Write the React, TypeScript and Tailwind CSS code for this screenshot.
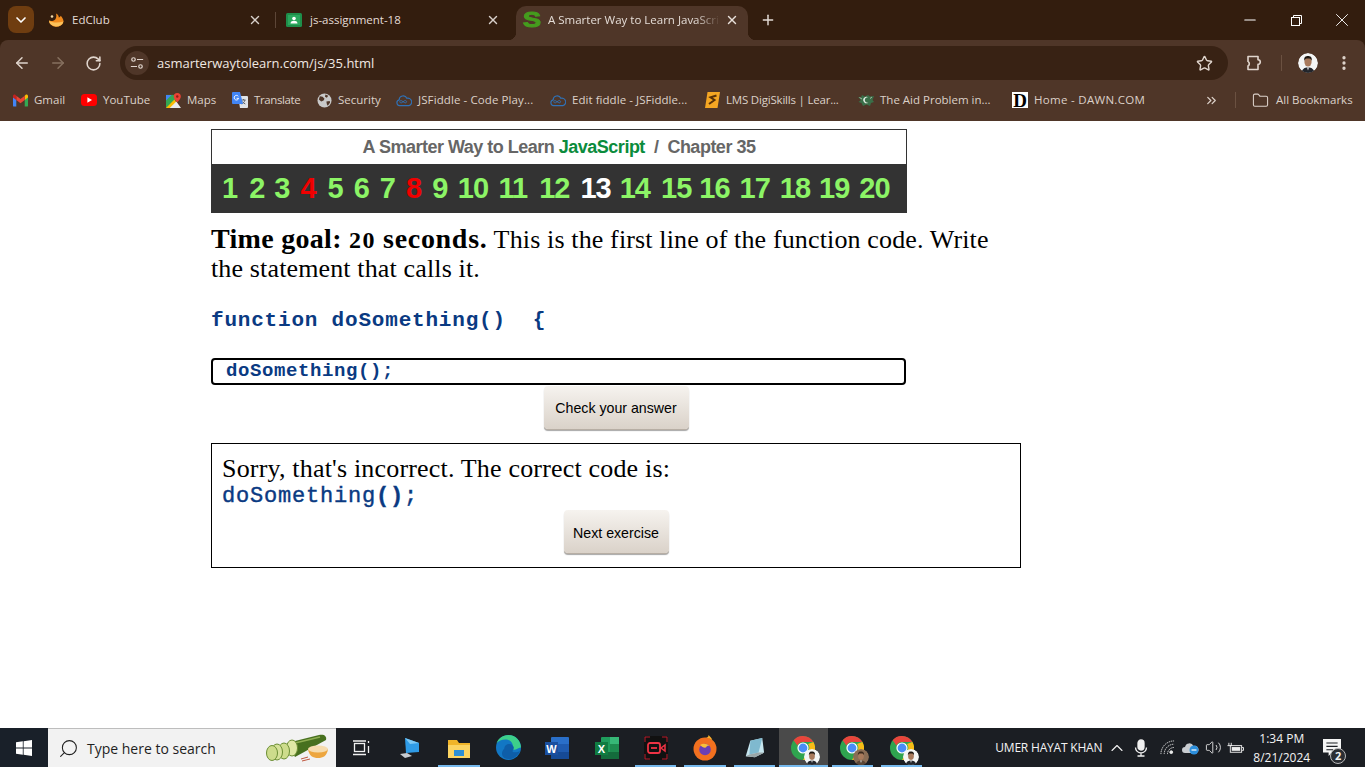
import React from "react";
import {
  ChevronDown, X, Plus, ArrowLeft, ArrowRight, RotateCw, Star, EllipsisVertical,
  Folder, ChevronsRight, Minus, ChevronUp, Search, Volume2,
} from "lucide-react";

const ui = "font-['Open_Sans',sans-serif]";

function ChromeBall() {
  return (
    <svg viewBox="0 0 24 24" className="w-[24px] h-[24px]">
      <circle cx="12" cy="12" r="12" fill="#2fa44f" />
      <path d="M12 0a12 12 0 0 1 10.4 6H12a6 6 0 0 0-5.6 3.6L2.6 4.2A12 12 0 0 1 12 0z" fill="#e8453c" />
      <path d="M22.4 6A12 12 0 0 1 12 24l4.6-8A6 6 0 0 0 17 8z" fill="#f9bc15" />
      <circle cx="12" cy="12" r="5.6" fill="#fff" />
      <circle cx="12" cy="12" r="4.4" fill="#4a8df6" />
    </svg>
  );
}

function Face({ size, bg = "#f4f6f6", hair = "#1d1712", coat = "#22252b" }: { size: number; bg?: string; hair?: string; coat?: string }) {
  return (
    <svg viewBox="0 0 20 20" width={size} height={size}>
      <circle cx="10" cy="10" r="10" fill={bg} />
      <path d="M3.6 20c.4-4.4 3-5.6 6.4-5.6s6 1.2 6.4 5.6z" fill={coat} />
      <path d="M9 14.4h2l-1 3z" fill="#e8e8e8" />
      <ellipse cx="10" cy="8.8" rx="3.6" ry="4.8" fill="#a87a5c" />
      <path d="M6.2 8C5.8 3.6 8 3 10 3s4.2.6 3.8 5c-.6-2-1.6-2.4-3.8-2.4S6.8 6 6.2 8z" fill={hair} />
    </svg>
  );
}

function Flame() {
  return (
    <svg viewBox="0 0 16 16" className="w-[16px] h-[16px]">
      <path d="M1 8.500c2 .8 4.500.4 6-.8C8.200 6.600 8.800 4 8 1.500c2 .8 2.800 2.500 2.800 4 1-.3 1.700-1 2-1.800C14.500 6 15.500 7.500 15.500 9.500A7.300 6.300 0 0 1 1 8.500z" fill="#f08a1d" />
      <path d="M1 8.500c3 2.500 9 2.500 14.500 1A7.300 6 0 0 1 1 8.500z" fill="#fbc15a" />
      <circle cx="4" cy="4.500" r="1.300" fill="#f0d9a8" />
    </svg>
  );
}

function Classroom() {
  return (
    <svg viewBox="0 0 16 16" className="w-[16px] h-[16px]">
      <rect y="1" width="16" height="14" rx="1.500" fill="#1e8e4a" />
      <rect x="2" y="3" width="12" height="10" fill="#2aa75c" />
      <circle cx="8" cy="6.500" r="1.800" fill="#fff" />
      <path d="M4.500 11.500c0-2 1.800-2.700 3.500-2.700s3.500.7 3.500 2.700z" fill="#fff" />
    </svg>
  );
}

function Gmail() {
  return (
    <svg viewBox="0 0 16 13" className="w-[15px] h-[13px]">
      <path d="M0 2.500V12a1 1 0 0 0 1 1h2.500V5.500z" fill="#4285f4" />
      <path d="M16 2.500V12a1 1 0 0 1-1 1h-2.500V5.500z" fill="#34a853" />
      <path d="M12.500 1.500V6L16 3.400V1.700C16 .3 14.400-.4 13.300.5z" fill="#fbbc04" />
      <path d="M3.500 6V1.500L8 5l4.500-3.500V6L8 9.300z" fill="#ea4335" />
      <path d="M0 1.700v1.700L3.500 6V1.500L2.700.5C1.600-.4 0 .3 0 1.700z" fill="#c5221f" />
    </svg>
  );
}

function YouTube() {
  return (
    <svg viewBox="0 0 16 12" className="w-[16px] h-[12px]">
      <rect width="16" height="12" rx="3.500" fill="#f00" />
      <path d="M6.400 3.300v5.400L11 6z" fill="#fff" />
    </svg>
  );
}

function Maps() {
  return (
    <svg viewBox="0 0 16 16" className="w-[15px] h-[15px]">
      <path d="M0 2h10v14H0z" fill="#34a853" />
      <path d="M0 2h6L0 8z" fill="#4285f4" />
      <path d="M0 16l9-9 6 9z" fill="#fbbc04" />
      <path d="M4 16l7-7 5 7z" fill="#e8eaed" />
      <path d="M12 0a3.800 3.800 0 0 1 3.800 3.800C15.800 6.500 12 10 12 10S8.200 6.500 8.200 3.800A3.800 3.800 0 0 1 12 0z" fill="#ea4335" />
      <circle cx="12" cy="3.800" r="1.300" fill="#8f1d14" />
    </svg>
  );
}

function Translate() {
  return (
    <svg viewBox="0 0 16 16" className="w-[16px] h-[16px]">
      <path d="M6 4h9a1 1 0 0 1 1 1v10a1 1 0 0 1-1 1H8z" fill="#dfe3e8" />
      <path d="M9.500 8h4M11.500 7v1M13 8c-.5 2-2 3.500-3.300 4M10.300 9.500c.6 1 1.700 2 3 2.500" stroke="#5f6368" strokeWidth="1" fill="none" />
      <path d="M1 0h7l3 12H1a1 1 0 0 1-1-1V1a1 1 0 0 1 1-1z" fill="#4285f4" />
      <path d="M6.300 4.300a2.300 2.300 0 1 0 .4 2H4.600" stroke="#fff" strokeWidth="1" fill="none" />
    </svg>
  );
}

function Globe() {
  return (
    <svg viewBox="0 0 16 16" className="w-[15px] h-[15px]">
      <circle cx="8" cy="8" r="7.500" fill="#c9c9c9" />
      <path d="M3 3.500l3 .5 2 2-1 2-2.500 1L2 7zM9 1.500l3 1.500-1.500 2L8.500 4zM10 9l3.500-.5.5 1.500-2.500 3.500L10.500 12z" fill="#4f3628" />
    </svg>
  );
}

function Fiddle() {
  return (
    <svg viewBox="0 0 18 14" className="w-[16px] h-[13px]" fill="none" stroke="#2f72b8" strokeWidth="1.300">
      <path d="M4 12.800a3.300 3.300 0 0 1-.4-6.500 4.500 4.500 0 0 1 8.600-1.800 4 4 0 0 1 2.300 8.300z" />
      <path d="M6.800 7.600c-1.700-1.300-3 .2-2.400 1.300.6 1.100 2 1 2.900 0l1.800-1.300c1-.8 2.400-.7 2.800.4.400 1.100-1 2.400-2.600 1.200z" strokeWidth="1" />
    </svg>
  );
}

function Digi() {
  return (
    <svg viewBox="0 0 15 16" className="w-[15px] h-[16px]">
      <path d="M2.500 0H15l-2.500 16H0z" fill="#f5a623" />
      <path d="M11.500 3.500L5.500 5.300 9.500 8 4 12" stroke="#5a3208" strokeWidth="2" fill="none" />
    </svg>
  );
}

function Aid() {
  return (
    <svg viewBox="0 0 16 13" className="w-[16px] h-[13px]">
      <path d="M0 3l3 .5L4 1l3 1.500L10 1l2 1.500L16 2l-1.500 4L16 8l-3 1-1 3-3.500-1.500L5 12 3.500 9 .5 8 3 6z" fill="#3a6e48" />
      <path d="M10.500 3.500a3.200 3.200 0 1 0 0 5 2.700 2.700 0 1 1 0-5z" fill="#e6efe6" />
      <path d="M1.500 3.500L4 5M14 3l-2 1.500" stroke="#b9d0bc" strokeWidth=".8" />
    </svg>
  );
}

const bookmarks = [
  { icon: <Gmail />, label: "Gmail", w: "w-[31px]", t: "" },
  { icon: <YouTube />, label: "YouTube", w: "w-[46px]", t: "" },
  { icon: <Maps />, label: "Maps", w: "w-[29px]", t: "" },
  { icon: <Translate />, label: "Translate", w: "w-[46px]", t: "tracking-[-.4px]" },
  { icon: <Globe />, label: "Security", w: "w-[42px]", t: "" },
  { icon: <Fiddle />, label: "JSFiddle - Code Play...", w: "w-[116px]", t: "tracking-[.1px]" },
  { icon: <Fiddle />, label: "Edit fiddle - JSFiddle...", w: "w-[116px]", t: "tracking-[.05px]" },
  { icon: <Digi />, label: "LMS DigiSkills | Lear...", w: "w-[116px]", t: "tracking-[-.2px]" },
  { icon: <Aid />, label: "The Aid Problem in...", w: "w-[116px]", t: "" },
  {
    icon: (
      <span className="w-[16px] h-[16px] bg-white text-black flex items-center justify-center font-['Liberation_Serif',serif] text-[19px] leading-none font-bold">
        D
      </span>
    ),
    label: "Home - DAWN.COM",
    w: "w-[110px]",
    t: "tracking-[.3px]",
  },
];

function Tabs() {
  return (
    <div className={`h-[40px] bg-[#331d0e] flex items-start pl-[8px] text-[#e4dcd6] text-[11.500px] ${ui}`}>
      <div className="mt-[6px] w-[26px] h-[27px] rounded-[8px] bg-[#6f3d10] flex items-center justify-center text-white">
        <ChevronDown size={16} strokeWidth={2.500} />
      </div>
      <div className="mt-[6px] ml-[14px] w-[228px] h-[27px] flex items-center">
        <Flame />
        <span className="ml-[8px] flex-1">EdClub</span>
        <X size={14} strokeWidth={2.400} className="text-[#d8d0ca]" />
        <span className="ml-[13px] w-px h-[16px] bg-[#5d4637]" />
      </div>
      <div className="mt-[6px] ml-[10px] w-[214px] h-[27px] flex items-center">
        <Classroom />
        <span className="ml-[8px] flex-1">js-assignment-18</span>
        <X size={14} strokeWidth={2.400} className="text-[#d8d0ca]" />
      </div>
      <div className="mt-[6px] ml-[16px] w-[232px] h-[34px] rounded-t-[10px] bg-[#4f3628] relative flex items-center pl-[8px] pb-[7px]">
        <span className="absolute left-[-8px] bottom-0 w-[8px] h-[8px] bg-[radial-gradient(circle_at_0_0,transparent_8px,#4f3628_8.500px)]" />
        <span className="absolute right-[-8px] bottom-0 w-[8px] h-[8px] bg-[radial-gradient(circle_at_100%_0,transparent_8px,#4f3628_8.500px)]" />
        <span className="w-[16px] text-center text-[#459c1e] [-webkit-text-stroke:1px_#459c1e] font-['Liberation_Sans',sans-serif] font-bold text-[22px] leading-none scale-x-125">S</span>
        <span className="ml-[8px] w-[176px] overflow-hidden whitespace-nowrap [mask-image:linear-gradient(to_right,black_84%,transparent_98%)]">
          A Smarter Way to Learn JavaScript
        </span>
        <X size={14} strokeWidth={2.400} className="ml-[1px] text-[#e8e0da]" />
      </div>
      <div className="mt-[6px] ml-[12px] h-[27px] flex items-center text-[#e4dcd6]">
        <Plus size={16} strokeWidth={2.200} />
      </div>
      <div className="ml-auto h-[40px] flex items-center text-white">
        <div className="w-[46px] flex justify-center"><Minus size={18} strokeWidth={1.400} /></div>
        <div className="w-[46px] flex justify-center">
          <svg viewBox="0 0 11 11" className="w-[11px] h-[11px]" fill="none" stroke="#fff" strokeWidth="1">
            <rect x=".5" y="2.500" width="8" height="8" />
            <path d="M2.500 2.500v-2h8v8h-2" />
          </svg>
        </div>
        <div className="w-[46px] flex justify-center"><X size={22} strokeWidth={1} /></div>
      </div>
    </div>
  );
}

function Toolbar() {
  return (
    <div className="h-[40px] bg-[#4f3628] rounded-t-[8px] flex items-end relative text-[#e0d5cd]">
      <div className="h-[34px] w-[120px] flex items-center pl-[13px] gap-[18px]">
        <ArrowLeft size={18} strokeWidth={2} />
        <ArrowRight size={18} strokeWidth={2} className="text-[#86705f]" />
        <RotateCw size={17} strokeWidth={2.200} />
      </div>
      <div className="h-[34px] w-[1108px] rounded-full bg-[#382214] flex items-center pl-[5px] pr-[15px]">
        <span className="w-[24px] h-[24px] rounded-full bg-[#4f3628] flex items-center justify-center">
          <svg viewBox="0 0 16 16" className="w-[14px] h-[14px]" fill="none" stroke="#e0d5cd" strokeWidth="1.400">
            <circle cx="4" cy="4" r="2" />
            <path d="M8 4h7M1 12h7" />
            <circle cx="12" cy="12" r="2" />
          </svg>
        </span>
        <span className={`ml-[8px] pt-[1px] flex-1 text-[13px] text-[#f0e8e2] ${ui}`}>asmarterwaytolearn.com/js/35.html</span>
        <Star size={17} strokeWidth={2} />
      </div>
      <div className="h-[34px] flex-1 flex items-center">
        <svg viewBox="0 0 20 20" className="w-[20px] h-[20px] ml-[17px]" fill="none" stroke="#e0d5cd" strokeWidth="1.600" strokeLinejoin="round">
          <path d="M3 3.500h10v3.300a2.300 2.300 0 0 1 0 4.600v5.100H3v-3.500a2.400 2.400 0 0 0 1-3.300 2.400 2.400 0 0 0-1-1.300z" />
        </svg>
        <span className="ml-[16px] w-px h-[16px] bg-[#6b5141]" />
        <span className="ml-[16px] w-[20px] h-[20px] rounded-full overflow-hidden"><Face size={20} /></span>
        <EllipsisVertical size={18} strokeWidth={2.400} className="ml-[17px]" />
      </div>
    </div>
  );
}

function Bookmarks() {
  return (
    <div className={`h-[41px] pb-[1px] bg-[#4f3628] flex items-center pl-[12px] text-[#dcd1c9] text-[11.500px] ${ui}`}>
      {bookmarks.map((b) => (
        <div key={b.label} className="flex items-center mr-[16px]">
          <span className="w-[16px] flex items-center justify-center">{b.icon}</span>
          <span className={`ml-[6px] whitespace-nowrap ${b.w} ${b.t}`}>{b.label}</span>
        </div>
      ))}
      <ChevronsRight size={15} strokeWidth={2} className="ml-[44px]" />
      <span className="ml-[16px] w-px h-[16px] bg-[#6b5141]" />
      <Folder size={17} strokeWidth={1.500} className="ml-[16px]" />
      <span className="ml-[7px] whitespace-nowrap">All Bookmarks</span>
    </div>
  );
}

const nums = [
  { n: 1, c: "ml-[11px]" }, { n: 2, c: "ml-[12px]" }, { n: 3, c: "ml-[10px]" }, { n: 4, c: "ml-[11px]" },
  { n: 5, c: "ml-[12px]" }, { n: 6, c: "ml-[11px]" }, { n: 7, c: "ml-[11px]" }, { n: 8, c: "ml-[11px]" },
  { n: 9, c: "ml-[11px]" }, { n: 10, c: "ml-[10.500px]" }, { n: 11, c: "ml-[10.500px]" }, { n: 12, c: "ml-[12px]" },
  { n: 13, c: "ml-[11px]" }, { n: 14, c: "ml-[9px]" }, { n: 15, c: "ml-[11px]" }, { n: 16, c: "ml-[8px]" },
  { n: 17, c: "ml-[10px]" }, { n: 18, c: "ml-[10px]" }, { n: 19, c: "ml-[9px]" }, { n: 20, c: "ml-[10px]" },
];
const numClass = (n: number) => (n === 13 ? "text-white" : n === 4 || n === 8 ? "text-[#f00000]" : "text-[#8cf466]");

function Btn({ children, w, pad }: { children: React.ReactNode; w: string; pad: string }) {
  return (
    <button className={`${w} ${pad} h-[43px] block mx-auto rounded-[4px] bg-gradient-to-b from-[#f6f3ef] to-[#dad2c9] shadow-[0_1px_0_#b7aea4,0_2px_1px_rgba(0,0,0,.35)] text-black text-[14.200px] font-['Liberation_Sans',sans-serif]`}>
      {children}
    </button>
  );
}

function Page() {
  return (
    <main className="flex-1 bg-white pl-[211px] pt-[8px] font-['Liberation_Serif',serif] text-black">
      <div className="w-[810px]">
        <div className="w-[696px] h-[84px] border border-[#333] border-b-0 font-['Liberation_Sans',sans-serif]">
          <div className="h-[34px] flex items-center justify-center font-bold text-[18px] tracking-[-.5px] text-[#666]">
            A Smarter Way to Learn&nbsp;<span className="text-[#0b8c3c]">JavaScript</span>&nbsp;&nbsp;/&nbsp;&nbsp;Chapter 35
          </div>
          <div className="h-[49px] bg-[#333] flex items-center font-bold text-[29px] tracking-[-1px] mx-[-1px]">
            {nums.map(({ n, c }) => (
              <span key={n} className={`${c} ${numClass(n)}`}>{n}</span>
            ))}
          </div>
        </div>
        <p className="mt-[12px] w-[790px] text-[26px] leading-[29px] tracking-[.14px]">
          <b className="text-[28px] leading-[0] tracking-[.3px]">Time goal: <span className="text-[24px] leading-[0] tracking-[1.300px]">20</span> <span className="tracking-[.7px]">seconds.</span></b> This is the first line of the function code. Write the statement that calls it.
        </p>
        <p className="mt-[23px] text-[21px] tracking-[.8px] leading-[29px] font-bold text-[#0a3a82] font-['Liberation_Mono',monospace] whitespace-pre">
          function doSomething()  {"{"}
        </p>
        <div className="mt-[23px] w-[695px] h-[27px] rounded-[4px] border-2 border-black pl-[13px] flex items-center text-[19px] tracking-[.6px] font-bold text-[#0a3a82] font-['Liberation_Mono',monospace]">
          doSomething();
        </div>
        <div className="mt-[1px]"><Btn w="w-[145px]" pad="pt-[2px]">Check your answer</Btn></div>
        <div className="mt-[14px] h-[125px] border border-black px-[10px] pt-[11px]">
          <p className="text-[26px] leading-[27px] tracking-[.18px]">Sorry, that's incorrect. The correct code is:</p>
          <p className="text-[22px] tracking-[.8px] leading-[29px] text-[#0a3a82] [-webkit-text-stroke:.4px_#0a3a82] font-['Liberation_Mono',monospace]">
            doSomething<b>()</b>;
          </p>
          <div className="mt-[-1px]"><Btn w="w-[105px]" pad="pt-[4px]">Next exercise</Btn></div>
        </div>
      </div>
    </main>
  );
}

function TaskIcon({ children, on, active }: { children: React.ReactNode; on?: boolean; active?: boolean }) {
  return (
    <div className={`w-[49.200px] h-[39px] flex items-center justify-center relative ${active ? "bg-[#4a4a4a]" : ""}`}>
      {children}
      {on && <span className={`absolute bottom-0 h-[2px] bg-[#76b9ed] ${active ? "left-0 right-0" : "left-[4px] right-[4px]"}`} />}
    </div>
  );
}

function ChromeWithFace({ bg, hair, coat }: { bg?: string; hair?: string; coat?: string }) {
  return (
    <span className="relative w-[24px] h-[24px] block">
      <ChromeBall />
      <span className="absolute right-[-5px] bottom-[-5px] w-[16px] h-[16px] rounded-full overflow-hidden"><Face size={16} bg={bg} hair={hair} coat={coat} /></span>
    </span>
  );
}

function Taskbar() {
  return (
    <footer className={`h-[39px] bg-[#1b1e23] flex items-stretch text-white ${ui}`}>
      <div className="w-[48px] flex items-center justify-center bg-[#192029]">
        <svg viewBox="0 0 16 16" className="w-[16px] h-[16px]" fill="#fff">
          <path d="M0 2.300l6.800-1v6.300H0zM7.600 1.200L16 0v7.600H7.600zM0 8.400h6.800v6.300l-6.800-1zM7.600 8.400H16V16l-8.400-1.200z" />
        </svg>
      </div>
      <div className="w-[288px] bg-[#f2f2f2] border-t border-[#bdbdbd] flex items-center pl-[10px] text-[#1f1f1f]">
        <Search size={21} strokeWidth={1.200} className="-scale-x-100" />
        <span className="ml-[8px] text-[14px] flex-1">Type here to search</span>
        <svg viewBox="0 0 66 28" className="w-[66px] h-[28px] mr-[5px]">
          <path d="M22 9L54 1c5-1 8 1 7 5L30 23z" fill="#47701f" />
          <path d="M26 10L55 3" stroke="#8fae52" strokeWidth="1.500" />
          <ellipse cx="27" cy="14" rx="5.500" ry="8" fill="#dfe8a6" stroke="#6c8f34" />
          <ellipse cx="19" cy="17" rx="5.500" ry="8" fill="#cddc8c" stroke="#6c8f34" />
          <ellipse cx="12" cy="18" rx="5.500" ry="8" fill="#d6e29a" stroke="#6c8f34" />
          <ellipse cx="7" cy="19" rx="5.500" ry="7.500" fill="#cddc8c" stroke="#6c8f34" />
          <path d="M43 15h20c-1 7-5 9-10 9s-9-2-10-9z" fill="#eda63f" />
          <ellipse cx="53" cy="15" rx="10" ry="3.500" fill="#f6dcae" />
          <path d="M36 25l7-2M37 27l8-2" stroke="#c0563e" strokeWidth="1" />
        </svg>
      </div>
      <div className="flex">
        <TaskIcon>
          <svg viewBox="0 0 18 16" className="w-[18px] h-[16px]" fill="none" stroke="#f0f0f0" strokeWidth="1.300">
            <rect x="2.500" y="3.500" width="10" height="8" />
            <path d="M1 1h13M1 14.500h13M16.500 1v2M16.500 6v7" />
          </svg>
        </TaskIcon>
        <TaskIcon>
          <svg viewBox="0 0 24 24" className="w-[24px] h-[24px]">
            <path d="M7 2l14 5v9l-13 1z" fill="#2f9be6" />
            <path d="M7 2l14 5-9 1z" fill="#7cc8f5" />
            <path d="M2 18l7-1 5 3-7 2z" fill="#c7ccd1" />
          </svg>
        </TaskIcon>
        <TaskIcon on>
          <svg viewBox="0 0 24 22" className="w-[24px] h-[22px]">
            <path d="M1 3h9l2 3h11v15H1z" fill="#f0b429" />
            <rect x="1" y="8" width="22" height="13" fill="#fcd462" />
            <rect x="7" y="13" width="10" height="6" fill="#2d8fd5" />
          </svg>
        </TaskIcon>
        <TaskIcon>
          <svg viewBox="0 0 24 24" className="w-[25px] h-[25px]">
            <circle cx="12" cy="12" r="12" fill="#1277c4" />
            <path d="M24 12c0-6-5-12-12-12C6 0 2 3.500.5 8c3-4 12-6 15 0 1 2 .5 3.500-1 4.500-1 .7 3 2.500 5.500 1 2-1.200 4-1.500 4-1.500z" fill="#3dd08a" />
            <path d="M8 13c0-4 5-6 8-3s-1 5 0 6 5 1 7-1c-2 6-9 10-15 7-3-2-3-6 0-9z" fill="#0e5ea8" />
          </svg>
        </TaskIcon>
        <TaskIcon>
          <svg viewBox="0 0 24 22" className="w-[24px] h-[22px]">
            <rect x="6" y="0" width="18" height="22" rx="1" fill="#2a6fc9" />
            <rect x="6" y="7" width="18" height="8" fill="#1f5bb0" />
            <rect x="6" y="15" width="18" height="7" fill="#164a96" />
            <rect x="0" y="5" width="13" height="13" fill="#1a4f9f" />
            <text x="6.500" y="15.500" textAnchor="middle" fontSize="11" fontWeight="700" fill="#fff" fontFamily="Liberation Sans">W</text>
          </svg>
        </TaskIcon>
        <TaskIcon>
          <svg viewBox="0 0 24 22" className="w-[24px] h-[22px]">
            <rect x="6" y="0" width="18" height="22" rx="1" fill="#1f9d5c" />
            <rect x="15" y="0" width="9" height="7" fill="#37b877" />
            <rect x="15" y="7" width="9" height="8" fill="#1e8c50" />
            <rect x="6" y="15" width="18" height="7" fill="#146b3c" />
            <rect x="0" y="5" width="13" height="13" fill="#107c41" />
            <text x="6.500" y="15.500" textAnchor="middle" fontSize="11" fontWeight="700" fill="#fff" fontFamily="Liberation Sans">X</text>
          </svg>
        </TaskIcon>
        <TaskIcon on>
          <svg viewBox="0 0 24 24" className="w-[24px] h-[24px]">
            <rect width="24" height="24" rx="3" fill="#111" />
            <path d="M1 6V1h5M18 1h5v5M1 18v5h5M18 23h5v-5" stroke="#b91c2c" strokeWidth="1" fill="none" />
            <rect x="4" y="7" width="12" height="10" rx="2" fill="none" stroke="#ee3344" strokeWidth="1.800" />
            <path d="M17 12l4-3v6z" fill="none" stroke="#ee3344" strokeWidth="1.500" />
            <path d="M7 12h6" stroke="#ee3344" strokeWidth="1.800" />
          </svg>
        </TaskIcon>
        <TaskIcon on>
          <svg viewBox="0 0 24 26" className="w-[24px] h-[26px]">
            <circle cx="12" cy="14" r="11.500" fill="#f2701f" />
            <path d="M12 2.500c6 0 11.500 5 11.500 11.500 0-5-3-7-4-8.500C19 3 16.500 1 15.500 0 15.800 2 14 2.500 12 2.500z" fill="#fbb02c" />
            <circle cx="12" cy="14.500" r="5.800" fill="#6a3fb5" />
            <path d="M7 10c3-2 7-1.500 9.500 1-1.500-.5-3 0-3.500 1.500-2 .5-4-.5-6-2.500z" fill="#f8c13a" />
          </svg>
        </TaskIcon>
        <TaskIcon on>
          <svg viewBox="0 0 24 24" className="w-[22px] h-[24px]">
            <path d="M3 21L8 4l13-3 2 16-10 5z" fill="#c6e6ef" />
            <path d="M8 4l13-3-4 16-10 2z" fill="#7fb9cf" />
            <path d="M3 21l4-2 10-2 6 0-10 5z" fill="#9aa6a8" />
          </svg>
        </TaskIcon>
        <TaskIcon on active><ChromeWithFace /></TaskIcon>
        <TaskIcon on><ChromeWithFace bg="#8a6d55" hair="#3a2a1e" coat="#5a4636" /></TaskIcon>
        <TaskIcon on><ChromeWithFace /></TaskIcon>
      </div>
      <div className="flex-1 flex items-center pl-[69px] text-[#f3f3f3]">
        <span className="text-[12px] tracking-[-.2px] whitespace-nowrap w-[106px]">UMER HAYAT KHAN</span>
        <ChevronUp size={20} strokeWidth={1.300} className="ml-[6px]" />
        <svg viewBox="0 0 14 18" className="w-[14px] h-[18px] ml-[7px]" fill="none" stroke="#f0f0f0" strokeWidth="1.300">
          <rect x="4" y="1" width="6" height="10" rx="3" fill="#f0f0f0" />
          <path d="M1.500 8.500a5.500 5.500 0 0 0 11 0M7 14v3M3.500 17h7" />
        </svg>
        <svg viewBox="0 0 16 16" className="w-[15px] h-[15px] ml-[12px]" fill="none" stroke="#e8e8e8" strokeWidth="1">
          <path d="M1 15A14 14 0 0 1 15 1M4.500 15A10.500 10.500 0 0 1 15 4.500M8 15a7 7 0 0 1 7-7" strokeDasharray="1.500 .8" />
          <circle cx="12" cy="13" r="1.500" fill="#e8e8e8" />
        </svg>
        <svg viewBox="0 0 18 14" className="w-[18px] h-[14px] ml-[7px]">
          <path d="M3 12a3 3 0 0 1 0-6 4.500 4.500 0 0 1 8.500-1A3.500 3.500 0 0 1 14 12z" fill="#c8ccd0" />
          <circle cx="12" cy="9" r="4.500" fill="#2c8fdc" />
          <path d="M9.500 9h5" stroke="#fff" strokeWidth="1.200" />
        </svg>
        <Volume2 size={17} strokeWidth={1.200} className="ml-[5px]" />
        <svg viewBox="0 0 18 12" className="w-[17px] h-[12px] ml-[5px]" fill="none" stroke="#eee">
          <rect x="3.500" y="3.500" width="12" height="7" />
          <rect x="5" y="5" width="9" height="4" fill="#eee" stroke="none" />
          <path d="M16 5.500h1.500v3H16M2 .5v3M4.500 .5v3M0.500 3.500h5" />
        </svg>
        <div className="w-[75px] ml-[0px] flex flex-col items-center text-[12px] leading-[19px]">
          <span>1:34 PM</span>
          <span>8/21/2024</span>
        </div>
        <div className="relative ml-[4px]">
          <svg viewBox="0 0 16 16" className="w-[18px] h-[18px]" fill="#f5f5f5">
            <path d="M0 0h16v12H8l-3 3v-3H0z" />
            <path d="M3 3.500h10M3 6.500h10M3 9.500h6" stroke="#1b1e23" strokeWidth="1" />
          </svg>
          <span className="absolute left-[7px] top-[9px] w-[16px] h-[16px] rounded-full bg-[#2b2e33] border border-[#b9b9b9] text-[11px] font-bold leading-[14px] text-center">2</span>
        </div>
      </div>
    </footer>
  );
}

export default function App() {
  return (
    <div className="w-[1365px] h-[767px] flex flex-col overflow-hidden bg-[#331d0e]">
      <Tabs />
      <Toolbar />
      <Bookmarks />
      <Page />
      <Taskbar />
    </div>
  );
}
